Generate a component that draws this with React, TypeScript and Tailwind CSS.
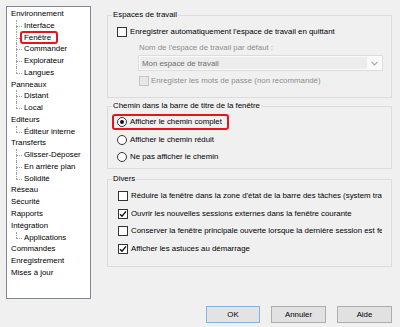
import React from 'react';

type Node = { label: string; children?: string[]; marked?: string };

const tree: Node[] = [
  { label: 'Environnement', children: ['Interface', 'Fenêtre', 'Commander', 'Explorateur', 'Langues'], marked: 'Fenêtre' },
  { label: 'Panneaux', children: ['Distant', 'Local'] },
  { label: 'Editeurs', children: ['Éditeur interne'] },
  { label: 'Transferts', children: ['Glisser-Déposer', 'En arrière plan', 'Solidité'] },
  { label: 'Réseau' },
  { label: 'Sécurité' },
  { label: 'Rapports' },
  { label: 'Intégration', children: ['Applications'] },
  { label: 'Commandes' },
  { label: 'Enregistrement' },
  { label: 'Mises à jour' },
];

const Check = ({ checked, disabled }: { checked?: boolean; disabled?: boolean }) => (
  <span
    className={
      'flex items-center justify-center w-[10px] h-[10px] shrink-0 border ' +
      (disabled ? 'border-[#c4c4c4] bg-[#e8e8e8]' : 'border-[#333333] bg-white')
    }
  >
    {checked && (
      <svg width="8" height="8" viewBox="0 0 8 8">
        <path d="M1 4.2 L3 6.2 L7 1.4" fill="none" stroke="#111" strokeWidth="1.4" />
      </svg>
    )}
  </span>
);

const Radio = ({ checked }: { checked?: boolean }) => (
  <span className="flex items-center justify-center w-[10px] h-[10px] shrink-0 rounded-full border border-[#333333] bg-white">
    {checked && <span className="w-[4px] h-[4px] rounded-full bg-[#111]" />}
  </span>
);

const Group = ({ title, className, children }: { title: string; className: string; children: React.ReactNode }) => (
  <div className={'relative border border-[#dcdcdc] ' + className}>
    <span className="absolute left-[4px] top-[-7px] px-[1px] leading-[12px] bg-[#f0f0f0]">{title}</span>
    {children}
  </div>
);

const Row = ({ children }: { children: React.ReactNode }) => (
  <div className="flex items-center h-[12px] gap-[3px] whitespace-nowrap">{children}</div>
);

export default function App() {
  return (
    <div
      className="w-[400px] h-[327px] bg-[#f0f0f0] text-[7.85px] leading-[12px] text-black overflow-hidden"
      style={{ fontFamily: '"Liberation Sans", Arial, sans-serif' }}
    >
      <div className="flex pt-[6px] pl-[6px]">
        {/* Tree */}
        <div className="w-[85px] h-[293px] border border-[#828790] bg-white pt-[1px] pl-[4px]">
          {tree.map((n) => (
            <div key={n.label}>
              <div className="h-[11.77px] leading-[11.77px] whitespace-nowrap">{n.label}</div>
              {n.children?.map((c, i) => {
                const last = i === n.children!.length - 1;
                return (
                  <div key={c} className="flex h-[11.77px] leading-[11.77px] whitespace-nowrap">
                    <div className="relative w-[13px] shrink-0">
                      <div
                        className={
                          'absolute left-[5px] top-0 border-l border-dotted border-[#a0a0a0] ' +
                          (last ? 'h-[6px]' : 'h-full')
                        }
                      />
                      <div className="absolute left-[5px] top-[6px] w-[6px] border-t border-dotted border-[#a0a0a0]" />
                    </div>
                    {n.marked === c ? (
                      <span className="relative">
                        <span className="absolute left-[-4px] top-[-0.5px] w-[38px] h-[13px] rounded-[3px] border-2 border-[#e8141c]" />
                        {c}
                      </span>
                    ) : (
                      <span>{c}</span>
                    )}
                  </div>
                );
              })}
            </div>
          ))}
        </div>

        {/* Right pane */}
        <div className="ml-[16px] w-[285px] pt-[9px]">
          <Group title="Espaces de travail" className="h-[83px] pt-[10px] pl-[9px]">
            <Row>
              <Check />
              <span>Enregistrer automatiquement l'espace de travail en quittant</span>
            </Row>
            <div className="mt-[4px] pl-[22px] text-[#8d8d8d] h-[12px] whitespace-nowrap">
              Nom de l'espace de travail par défaut :
            </div>
            <div className="mt-[1px] ml-[21px] w-[245px] h-[16px] border border-[#dcdcdc] bg-[#fafafa] flex p-[1px]">
              <div className="flex-1 bg-[#ececec] pl-[2px] leading-[14px] text-[#6d6d6d]">Mon espace de travail</div>
              <div className="w-[14px] flex items-center justify-center">
                <svg width="7" height="5" viewBox="0 0 7 5">
                  <path d="M0.5 0.8 L3.5 3.8 L6.5 0.8" fill="none" stroke="#a8a8a8" strokeWidth="1.2" />
                </svg>
              </div>
            </div>
            <div className="mt-[4px] pl-[22px]">
              <Row>
                <Check disabled />
                <span className="text-[#8d8d8d] ml-[-1px]">Enregister les mots de passe (non recommandé)</span>
              </Row>
            </div>
          </Group>

          <Group title="Chemin dans la barre de titre de la fenêtre" className="mt-[8px] h-[63px] pt-[9px] pl-[9px]">
            <div className="flex flex-col gap-[5.5px]">
              <div className="relative">
                <span className="absolute left-[-5px] top-[-2px] w-[117px] h-[16px] rounded-[3px] border-2 border-[#e8141c]" />
                <Row>
                  <Radio checked />
                  <span>Afficher le chemin complet</span>
                </Row>
              </div>
              <Row>
                <Radio />
                <span>Afficher le chemin réduit</span>
              </Row>
              <Row>
                <Radio />
                <span>Ne pas afficher le chemin</span>
              </Row>
            </div>
          </Group>

          <Group title="Divers" className="mt-[10px] h-[88px] pt-[10px] pl-[10px] pr-[9px]">
            <div className="flex flex-col gap-[5.7px] overflow-hidden">
              <Row>
                <Check />
                <span>Réduire la fenêtre dans la zone d'état de la barre des tâches (system tray)</span>
              </Row>
              <Row>
                <Check checked />
                <span>Ouvrir les nouvelles sessions externes dans la fenêtre courante</span>
              </Row>
              <Row>
                <Check />
                <span>Conserver la fenêtre principale ouverte lorsque la dernière session est fermée</span>
              </Row>
              <Row>
                <Check checked />
                <span>Afficher les astuces au démarrage</span>
              </Row>
            </div>
          </Group>
        </div>
      </div>

      <div className="flex justify-end gap-[11px] pr-[8px] mt-[7px]">
        <button className="w-[54px] h-[17px] border border-[#7eb4ea] bg-[#e3e3e3] leading-[15px]">OK</button>
        <button className="w-[55px] h-[17px] border border-[#adadad] bg-[#e1e1e1] leading-[15px]">Annuler</button>
        <button className="w-[55px] h-[17px] border border-[#adadad] bg-[#e1e1e1] leading-[15px]">Aide</button>
      </div>
    </div>
  );
}
